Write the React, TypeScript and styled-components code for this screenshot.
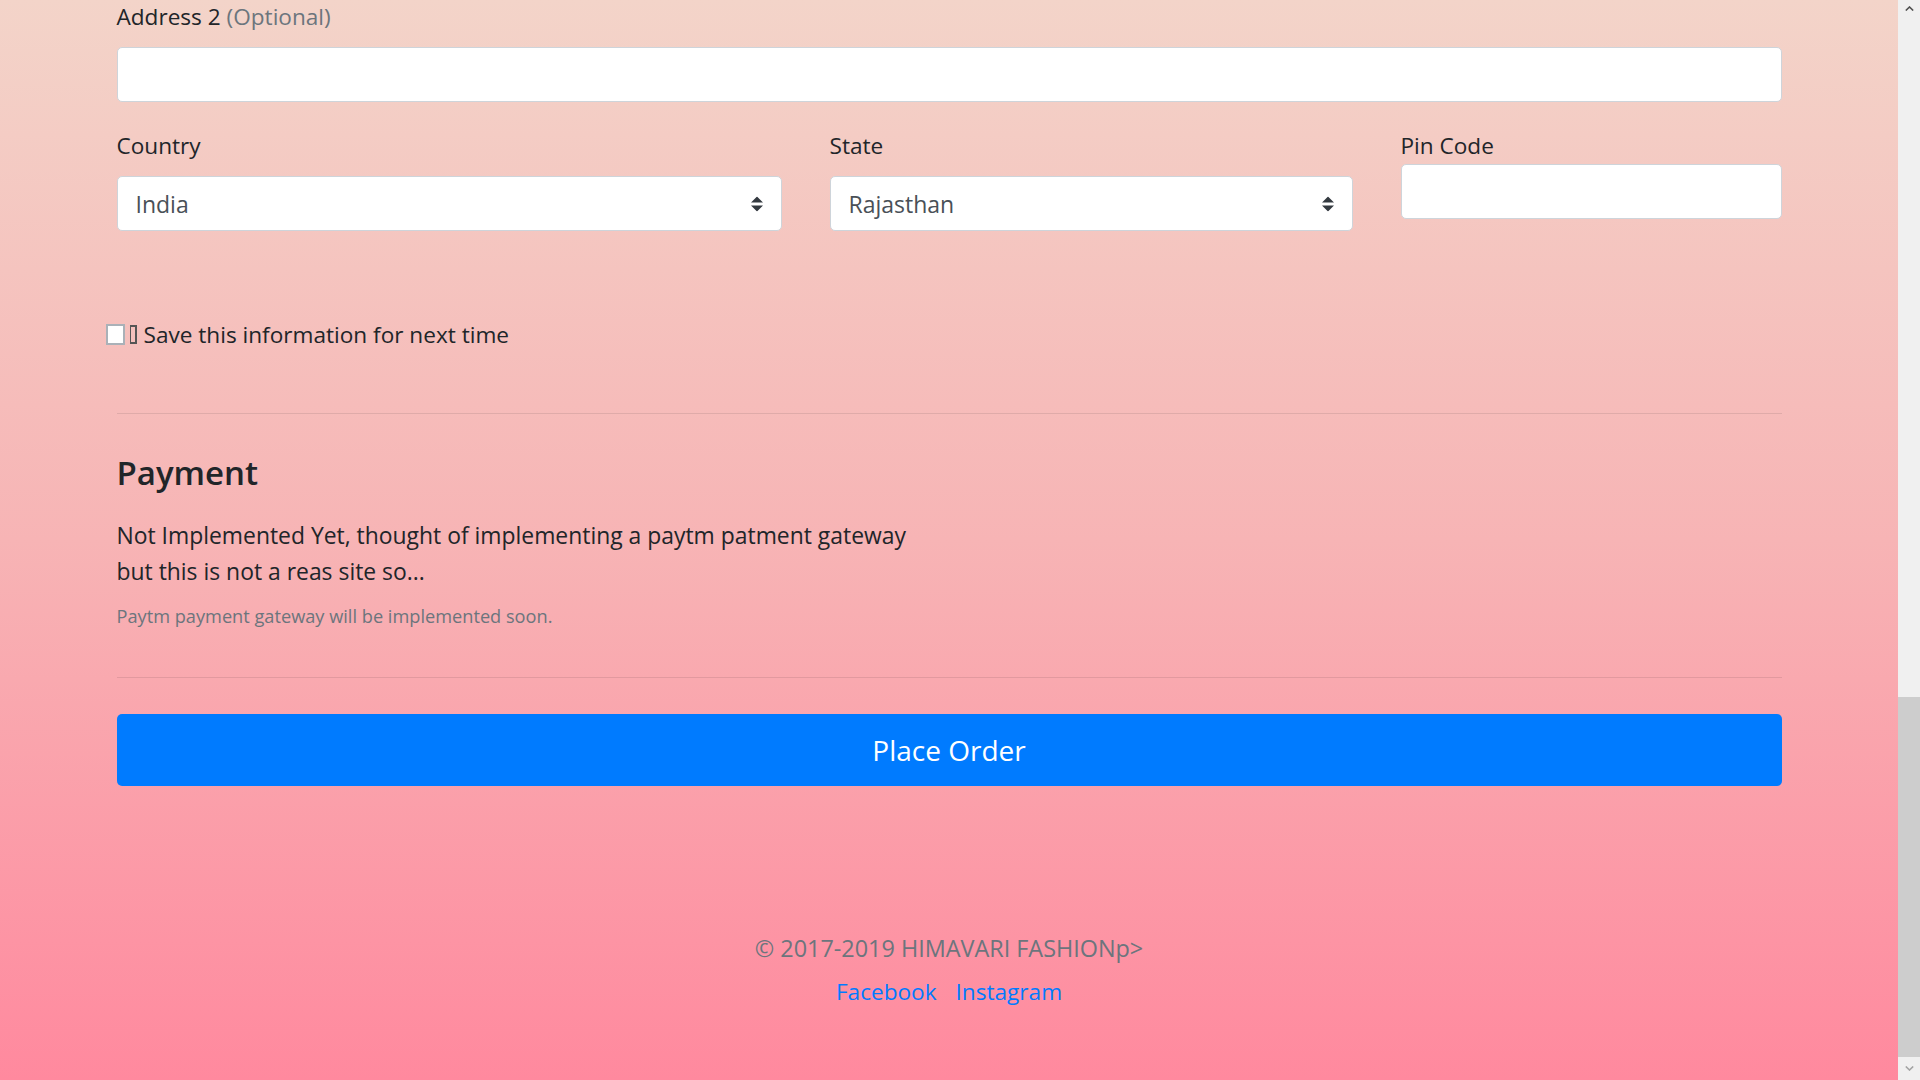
import React from "react";
import styled, { createGlobalStyle } from "styled-components";

const GlobalStyle = createGlobalStyle`
  html, body { margin: 0; padding: 0; height: 100%; overflow: hidden; }
  body { font-family: "Open Sans", "Liberation Sans", sans-serif; color: #212529; }
  *, *::before, *::after { box-sizing: border-box; }
`;

const Screen = styled.div`
  display: flex;
  width: 100vw;
  height: 100vh;
  overflow: hidden;
`;

const Viewport = styled.main`
  flex: 1;
  min-width: 0;
  overflow: hidden;
  background: linear-gradient(180deg, #f3d4c9 0%, #f7b4b5 50%, #ff899e 100%);
`;

const Container = styled.div`
  width: 1665px;
  margin: 0 auto;
  padding-top: 1px;
  display: flex;
  flex-direction: column;
`;

const Field = styled.div<{ $gap: number }>`
  display: flex;
  flex-direction: column;
  gap: ${(p) => p.$gap}px;
`;

const Label = styled.label`
  font-size: 22.6px;
  line-height: 32px;
  color: #212529;
`;

const Optional = styled.span`
  color: #6c757d;
`;

const TextInput = styled.input`
  width: 100%;
  height: 55px;
  padding: 0 18px;
  border: 1px solid #ced4da;
  border-radius: 5px;
  background: #fff;
  font: inherit;
  font-size: 22.6px;
  color: #495057;
  outline: none;
`;

const SelectWrap = styled.div`
  position: relative;
  width: 100%;
`;

const Select = styled.select`
  width: 100%;
  height: 55px;
  padding: 0 48px 0 18px;
  border: 1px solid #ced4da;
  border-radius: 5px;
  background: #fff;
  font: inherit;
  font-size: 23px;
  color: #495057;
  appearance: none;
  -webkit-appearance: none;
  outline: none;
`;

const SelectArrow = styled.svg`
  position: absolute;
  right: 19px;
  top: 50%;
  width: 12px;
  height: 15px;
  transform: translateY(-50%);
  pointer-events: none;
`;

const AddressRow = styled.div`
  display: grid;
  grid-template-columns: 665px 523px 1fr;
  column-gap: 48px;
  align-items: start;
  margin-top: 28px;
`;

const CheckRow = styled.label`
  display: flex;
  align-items: center;
  margin-top: 87px;
  margin-left: -11px;
  height: 32px;
  font-size: 22.6px;
  color: #212529;
`;

const CheckBox = styled.span`
  width: 19px;
  height: 21px;
  background: #fff;
  border: 2px solid #aab1b8;
  flex-shrink: 0;
`;

const CheckShadow = styled.span`
  width: 7px;
  height: 19px;
  margin-left: 5px;
  border: 2px solid #555;
  border-left-width: 1px;
  flex-shrink: 0;
`;

const CheckText = styled.span`
  margin-left: 7px;
`;

const Divider = styled.hr<{ $top: number }>`
  margin: ${(p) => p.$top}px 0 0;
  border: 0;
  border-top: 1px solid rgba(0, 0, 0, 0.09);
  height: 0;
`;

const Heading = styled.h4`
  margin: 38px 0 0;
  font-size: 33px;
  line-height: 42px;
  font-weight: 600;
  color: #212529;
`;

const Lead = styled.p`
  margin: 24px 0 0;
  max-width: 810px;
  font-size: 22.9px;
  line-height: 36px;
  color: #212529;
`;

const Muted = styled.small`
  display: block;
  margin-top: 13px;
  font-size: 18.2px;
  line-height: 26px;
  color: #6c757d;
`;

const PrimaryButton = styled.button`
  margin-top: 36px;
  height: 72px;
  width: 100%;
  border: 0;
  border-radius: 5px;
  background: #007bff;
  color: #fff;
  font: inherit;
  font-size: 28px;
  cursor: pointer;
`;

const Footer = styled.footer`
  margin-top: 146px;
  display: flex;
  flex-direction: column;
  align-items: center;
`;

const Copyright = styled.p`
  margin: 0;
  font-size: 23.4px;
  line-height: 33px;
  color: #6c757d;
`;

const Links = styled.div`
  margin-top: 10px;
  display: flex;
  gap: 19px;
`;

const FooterLink = styled.a`
  font-size: 22.6px;
  line-height: 33px;
  color: #007bff;
  text-decoration: none;
`;

const ScrollBar = styled.div`
  width: 22px;
  flex-shrink: 0;
  background: #f0f0f0;
  display: flex;
  flex-direction: column;
`;

const ScrollArrow = styled.div<{ $h: number; $color: string }>`
  height: ${(p) => p.$h}px;
  display: flex;
  align-items: center;
  justify-content: center;
  color: ${(p) => p.$color};
`;

const ScrollRail = styled.div`
  flex: 1;
  display: flex;
  flex-direction: column;
  justify-content: flex-end;
`;

const ScrollThumb = styled.div`
  height: 360px;
  background: #cdcdcd;
`;

const Arrows = () => (
  <SelectArrow viewBox="0 0 4 5">
    <path fill="#343a40" d="M2 0L0 2h4zm0 5L0 3h4z" />
  </SelectArrow>
);

export default function App() {
  return (
    <>
      <GlobalStyle />
      <Screen>
        <Viewport>
          <Container>
            <Field $gap={14}>
              <Label htmlFor="address2">
                Address 2 <Optional>(Optional)</Optional>
              </Label>
              <TextInput id="address2" type="text" />
            </Field>

            <AddressRow>
              <Field $gap={14}>
                <Label htmlFor="country">Country</Label>
                <SelectWrap>
                  <Select id="country" defaultValue="India">
                    <option>India</option>
                  </Select>
                  <Arrows />
                </SelectWrap>
              </Field>
              <Field $gap={14}>
                <Label htmlFor="state">State</Label>
                <SelectWrap>
                  <Select id="state" defaultValue="Rajasthan">
                    <option>Rajasthan</option>
                  </Select>
                  <Arrows />
                </SelectWrap>
              </Field>
              <Field $gap={2}>
                <Label htmlFor="zip">Pin Code</Label>
                <TextInput id="zip" type="text" />
              </Field>
            </AddressRow>

            <CheckRow>
              <CheckBox />
              <CheckShadow />
              <CheckText>Save this information for next time</CheckText>
            </CheckRow>

            <Divider $top={63} />

            <Heading>Payment</Heading>
            <Lead>
              Not Implemented Yet, thought of implementing a paytm patment gateway but this is not a reas site so...
            </Lead>
            <Muted>Paytm payment gateway will be implemented soon.</Muted>

            <Divider $top={48} />

            <PrimaryButton type="button">Place Order</PrimaryButton>

            <Footer>
              <Copyright>© 2017-2019 HIMAVARI FASHIONp&gt;</Copyright>
              <Links>
                <FooterLink href="#">Facebook</FooterLink>
                <FooterLink href="#">Instagram</FooterLink>
              </Links>
            </Footer>
          </Container>
        </Viewport>
        <ScrollBar>
          <ScrollArrow $h={17} $color="#505050">
            <svg width="9" height="5" viewBox="0 0 9 5">
              <path d="M0.8 4.5L4.5 1L8.2 4.5" fill="none" stroke="currentColor" strokeWidth="1.6" />
            </svg>
          </ScrollArrow>
          <ScrollRail>
            <ScrollThumb />
          </ScrollRail>
          <ScrollArrow $h={23} $color="#a3a3a3">
            <svg width="9" height="5" viewBox="0 0 9 5">
              <path d="M0.8 0.5L4.5 4L8.2 0.5" fill="none" stroke="currentColor" strokeWidth="1.6" />
            </svg>
          </ScrollArrow>
        </ScrollBar>
      </Screen>
    </>
  );
}
